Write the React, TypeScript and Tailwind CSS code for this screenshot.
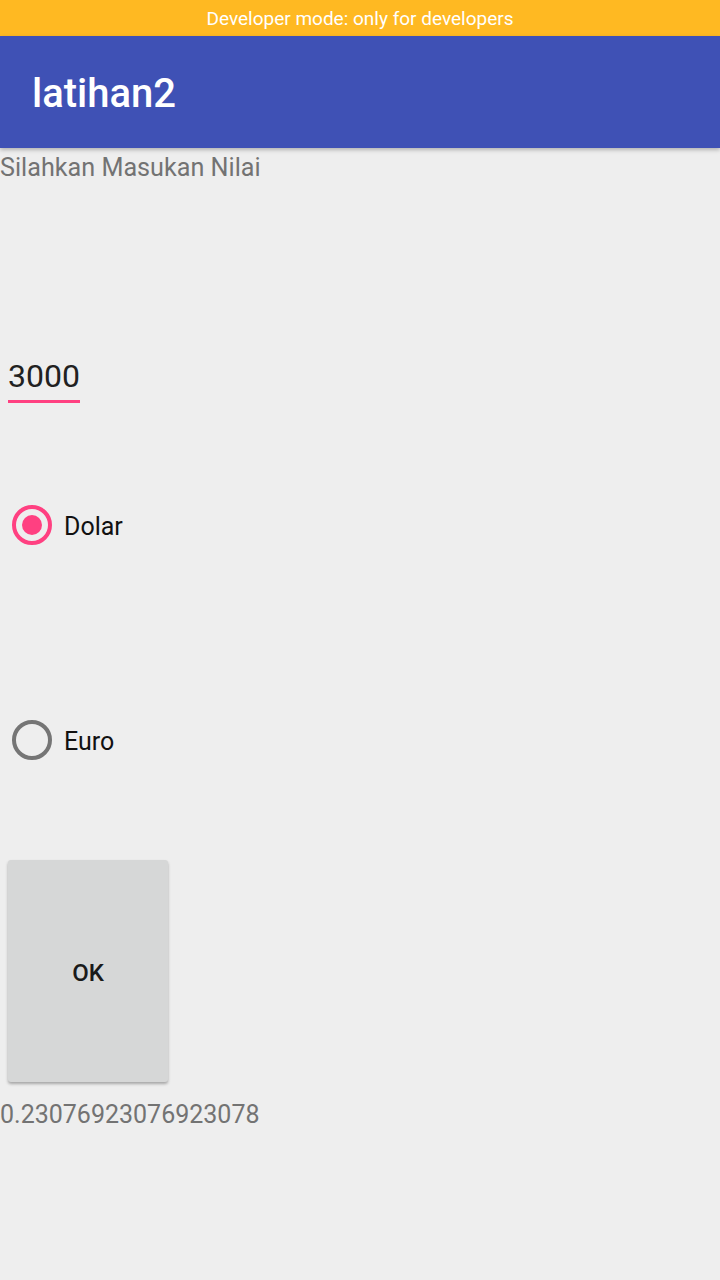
export default function App() {
  return (
    <div className="min-h-[1280px] w-[720px] bg-[#EEEEEE] font-['Roboto',sans-serif]">
      {/* status strip */}
      <div className="flex h-9 items-center justify-center bg-[#FFB922] pt-[2px] text-[19px] text-white">
        Developer mode: only for developers
      </div>

      {/* toolbar */}
      <div className="relative z-10 flex h-[112px] items-center bg-[#3F51B5] pl-8 pt-1 shadow-[0_2px_4px_rgba(0,0,0,0.25)]">
        <h1 className="text-[40px] font-medium text-white">latihan2</h1>
      </div>

      <div className="flex flex-col">
        <p className="h-9 pt-[2px] text-[25.2px] leading-[36px] text-[#737373]">Silahkan Masukan Nilai</p>

        {/* edit text */}
        <div className="ml-2 mt-[172px] w-[72px]">
          <p className="h-10 text-[32px] leading-[40px] text-[#212121]">3000</p>
          <div className="mt-1 h-[3px] bg-[#FF4081]" />
        </div>

        {/* radio group */}
        <div className="mt-[98px] flex h-12 items-center pl-3">
          <span className="flex h-10 w-10 items-center justify-center rounded-full border-[4px] border-[#FF4081]">
            <span className="h-5 w-5 rounded-full bg-[#FF4081]" />
          </span>
          <span className="ml-3 pt-1 text-[25px] text-[#111111]">Dolar</span>
        </div>

        <div className="mt-[167px] flex h-12 items-center pl-3">
          <span className="h-10 w-10 rounded-full border-[4px] border-[#757575]" />
          <span className="ml-3 pt-1 text-[25px] text-[#111111]">Euro</span>
        </div>

        <button className="ml-2 mt-24 flex h-[222px] w-40 items-center justify-center rounded-[3px] bg-[#D6D7D7] pt-1 text-[24px] font-medium text-[#1a1a1a] shadow-[0_2px_3px_rgba(0,0,0,0.3)]">
          OK
        </button>

        <p className="mt-4 h-[30px] pt-[2px] text-[25px] leading-[30px] text-[#737373]">0.23076923076923078</p>
      </div>
    </div>
  );
}
